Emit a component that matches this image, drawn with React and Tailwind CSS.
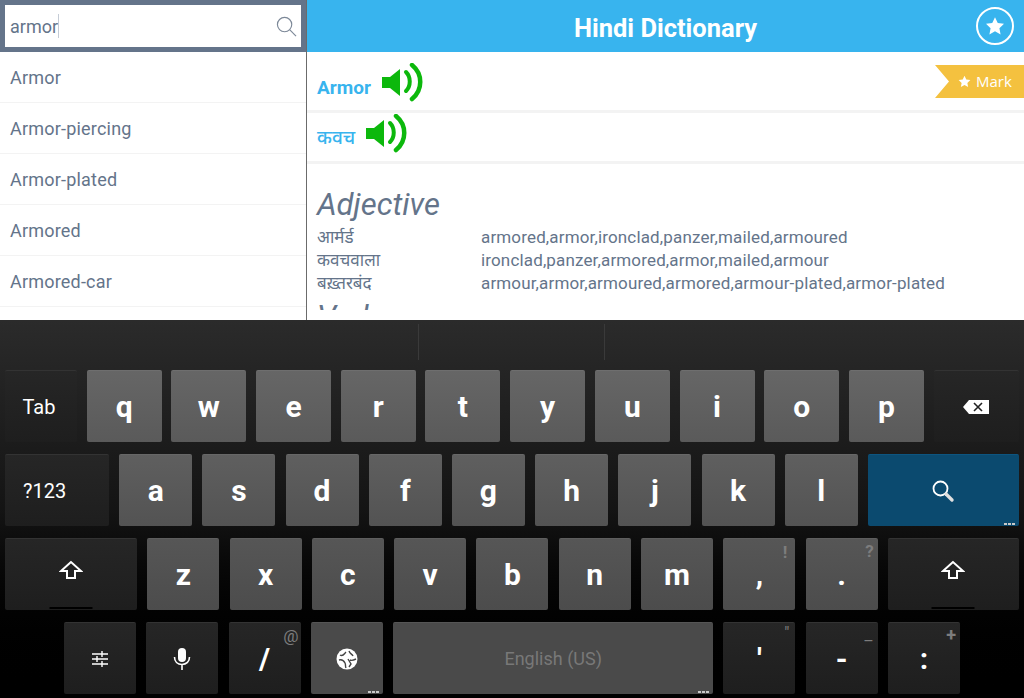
import React from 'react';

const rows = ['Armor', 'Armor-piercing', 'Armor-plated', 'Armored', 'Armored-car'];

const meanings = [
  ['आर्मर्ड', 'armored,armor,ironclad,panzer,mailed,armoured'],
  ['कवचवाला', 'ironclad,panzer,armored,armor,mailed,armour'],
  ['बख़्तरबंद', 'armour,armor,armoured,armored,armour-plated,armor-plated'],
];

// each keyboard row gets a little darker going down
const tones = {
  1: 'bg-gradient-to-b from-[#666] to-[#5a5a5a] border-t border-[#6e6e6e]',
  2: 'bg-gradient-to-b from-[#5f5f5f] to-[#535353] border-t border-[#676767]',
  3: 'bg-gradient-to-b from-[#565656] to-[#4c4c4c] border-t border-[#5e5e5e]',
  4: 'bg-[#4a4a4a] border-t border-[#555]',
};

const Speaker = () => (
  <svg width="42" height="40" viewBox="0 0 42 40" className="shrink-0">
    <path d="M0 14h8L18 6v27L8 25H0z" fill="#0cb80c" />
    <path d="M24 9c5 5 5 14 0 19" fill="none" stroke="#0cb80c" strokeWidth="4" strokeLinecap="round" />
    <path d="M30 2c11 9 11 25 0 34" fill="none" stroke="#0cb80c" strokeWidth="4.5" strokeLinecap="round" />
  </svg>
);

const Star = ({ size = 14 }) => (
  <svg width={size} height={size} viewBox="0 0 24 24" fill="white">
    <path d="M12 1.5l3.3 6.9 7.5 1-5.5 5.2 1.4 7.5L12 18.4l-6.7 3.7 1.4-7.5L1.2 9.4l7.5-1z" />
  </svg>
);

const Dots = () => (
  <span className="absolute right-[4px] bottom-[1px] flex gap-[1px]">
    <span className="w-[3px] h-[2px] bg-[#c8c8c8]" />
    <span className="w-[3px] h-[2px] bg-[#c8c8c8]" />
    <span className="w-[3px] h-[2px] bg-[#c8c8c8]" />
  </span>
);

const Key = ({ w, label, hint, hintClass = '', dark, tone = 1, dots, className = '', children }) => (
  <div
    style={{ width: w }}
    className={`relative h-[72px] shrink-0 rounded-[2px] flex items-center justify-center text-white font-bold text-[30px] ${
      dark ? 'bg-gradient-to-b from-[#262626] to-[#1e1e1e] border-t border-[#333]' : tones[tone]
    } ${className}`}
  >
    {label}
    {children}
    {hint && <span className={`absolute text-[#7d7d7d] ${hintClass}`}>{hint}</span>}
    {dots && <Dots />}
  </div>
);

const ShiftKey = ({ w }) => (
  <Key w={w} dark>
    <svg width="24" height="20" viewBox="0 0 24 20" fill="none" stroke="white" strokeWidth="2" className="mb-[10px]">
      <path d="M12 2L2 11h6v7h8v-7h6z" />
    </svg>
    <span className="absolute bottom-[1px] left-1/2 -translate-x-1/2 w-[43px] h-[2px] bg-black" />
  </Key>
);

export default function App() {
  return (
    <div className="w-[1024px] h-[698px] overflow-hidden font-['Roboto',sans-serif] bg-black">
      <div className="flex h-[320px] bg-white">
        <div className="w-[307px] shrink-0 border-r border-[#6b6b6b]">
          <div className="h-[52px] bg-[#64748a] p-[5px]">
            <div className="h-[42px] bg-white flex items-center pl-[5px] pr-[4px]">
              <span className="text-[18px] text-[#64748a]">armor</span>
              <span className="w-[1px] h-[24px] bg-[#c5ccd6]" />
              <svg width="21" height="21" viewBox="0 0 22 22" fill="none" stroke="#7c8898" strokeWidth="1.2" className="ml-auto">
                <circle cx="9" cy="9" r="7.5" />
                <path d="M14.5 14.5L21 21" />
              </svg>
            </div>
          </div>
          {rows.map((r) => (
            <div key={r} className="h-[51px] pl-[10px] flex items-center border-b border-[#f3f3f3] text-[18px] tracking-[0.2px] text-[#64748a]">
              {r}
            </div>
          ))}
        </div>
        <div className="flex-1 min-w-0">
          <div className="relative h-[52px] bg-[#38b4ee] flex items-center justify-center">
            <span className="text-white text-[25.5px] font-bold mt-[4px]">Hindi Dictionary</span>
            <div className="absolute right-[10px] top-[7px] w-[38px] h-[38px] rounded-full border-2 border-white flex items-center justify-center">
              <Star size={20} />
            </div>
          </div>
          <div className="relative h-[61px] border-b-[3px] border-[#f3f3f3] pl-[10px] flex items-start">
            <span className="mt-[22px] text-[#38b4ee] text-[19px] font-bold">Armor</span>
            <span className="mt-[11px] ml-[11px]"><Speaker /></span>
            <div className="absolute right-0 top-[13px] w-[89px] h-[33px] bg-[#f4c13f] [clip-path:polygon(0_0,100%_0,100%_100%,0_100%,14px_50%)] flex items-center pl-[23px] gap-[5px] text-white text-[15px] font-['Open_Sans',sans-serif]">
              <Star size={13} />
              Mark
            </div>
          </div>
          <div className="h-[51px] border-b-[3px] border-[#f3f3f3] pl-[10px] flex items-start">
            <span className="w-[39px] mt-[13px] text-[#38b4ee] text-[19px] font-medium whitespace-nowrap font-['Noto_Sans_Devanagari','Noto_Sans',sans-serif]">कवच</span>
            <span className="mt-[1px] ml-[10px]"><Speaker /></span>
          </div>
          <div className="h-[146px] overflow-hidden pl-[10px] text-[#64748a]">
            <div className="mt-[23px] text-[31px] leading-[36px] italic">Adjective</div>
            <div className="mt-[3px]">
              {meanings.map(([hi, en]) => (
                <div key={hi} className="flex h-[23px] items-center">
                  <span className="w-[164px] pt-[4px] text-[17px] leading-[23px] font-['Noto_Sans_Devanagari','Noto_Sans',sans-serif]">{hi}</span>
                  <span className="text-[17px] tracking-[0.15px] leading-[23px]">{en}</span>
                </div>
              ))}
            </div>
            <div className="mt-[4px] text-[31px] leading-[36px] italic">Verb</div>
          </div>
        </div>
      </div>

      <div className="h-[378px] bg-gradient-to-b from-[#2b2b2b] via-[#141414] to-black">
        <div className="h-[50px] flex">
          <div className="ml-[418px] mt-[4px] h-[36px] w-[1px] bg-[#3a3a3a]" />
          <div className="ml-[185px] mt-[4px] h-[36px] w-[1px] bg-[#3a3a3a]" />
        </div>

        <div className="flex flex-col gap-[12px] px-[5px]">
          <div className="flex gap-[9.7px]">
            <Key w={72} dark className="!text-[20px] !font-normal pr-[4px]" label="Tab" />
            {'qwertyuiop'.split('').map((c) => <Key key={c} w={75} tone={1} label={c} />)}
            <Key w={85} dark>
              <svg width="26" height="14" viewBox="0 0 26 14">
                <path d="M6 0h20v14H6L0 7z" fill="white" />
                <path d="M11 3l8 8M19 3l-8 8" stroke="#222" strokeWidth="1.6" />
              </svg>
            </Key>
          </div>

          <div className="flex gap-[10.2px]">
            <Key w={104} dark className="!text-[20px] !font-normal !justify-start pl-[18px]" label="?123" />
            {'asdfghjkl'.split('').map((c) => <Key key={c} w={73} tone={2} label={c} />)}
            <Key w={151} dots className="!bg-none !bg-[#0b4a6f] !border-[#0d5580]">
              <svg width="24" height="24" viewBox="0 0 24 24" fill="none" stroke="white">
                <circle cx="9.5" cy="9.5" r="7" strokeWidth="1.8" />
                <path d="M15 15l6 6" strokeWidth="3.4" strokeLinecap="round" stroke="#e0e0e0" />
              </svg>
            </Key>
          </div>

          <div className="flex gap-[10.3px]">
            <ShiftKey w={132} />
            {'zxcvbnm'.split('').map((c) => <Key key={c} w={72} tone={3} label={c} />)}
            <Key w={72} tone={3} label="," hint="!" hintClass="right-[8px] top-[3px] text-[17px] font-bold leading-[20px]" />
            <Key w={72} tone={3} label="." hint="?" hintClass="right-[4px] top-[2px] text-[17px] font-bold leading-[20px]" />
            <ShiftKey w={131} />
          </div>

          <div className="flex gap-[10.3px] pl-[59px]">
            <Key w={72} dark>
              <svg width="18" height="18" viewBox="0 0 18 18" stroke="white" strokeWidth="1.4" fill="none">
                <path d="M1 4h16M1 9h16M1 14h16M11 1v6M6 6v6M11 11v6" />
              </svg>
            </Key>
            <Key w={72} dark>
              <svg width="18" height="24" viewBox="0 0 18 24" fill="none">
                <rect x="5" y="1" width="8" height="14" rx="4" fill="white" />
                <path d="M1.5 10c0 4.5 3 7.5 7.5 7.5s7.5-3 7.5-7.5M9 17.5V23" stroke="white" strokeWidth="1.6" />
              </svg>
            </Key>
            <Key w={72} dark label="/" hint="@" hintClass="right-[2px] top-[3px] text-[17px] font-normal leading-[20px]" />
            <Key w={72} tone={4} dots>
              <svg width="22" height="22" viewBox="0 0 22 22" fill="none">
                <circle cx="11" cy="11" r="10.5" fill="white" />
                <path d="M4 7c3 2 4-1 6-3M13 3c1 3 3 3 4 5M3 12c3-1 5 1 6 3s0 3 1 5M14 12c2 1 4 0 6-1M12 11l3 5-2 3" stroke="#444" strokeWidth="1.4" />
              </svg>
            </Key>
            <Key w={320} tone={4} dots className="!text-[18px] !font-normal !text-[#787878]" label="English (US)" />
            <Key w={72} dark label="'" hint={'"'} hintClass="right-[6px] top-[2px] text-[16px] font-normal leading-[16px]" />
            <Key w={72} dark label="-" hint="–" hintClass="right-[4px] top-[10px] text-[16px] font-normal leading-[18px]" />
            <Key w={72} dark label=":" hint="+" hintClass="right-[4px] top-[2px] text-[18px] font-bold leading-[20px]" />
          </div>
        </div>
      </div>
    </div>
  );
}
